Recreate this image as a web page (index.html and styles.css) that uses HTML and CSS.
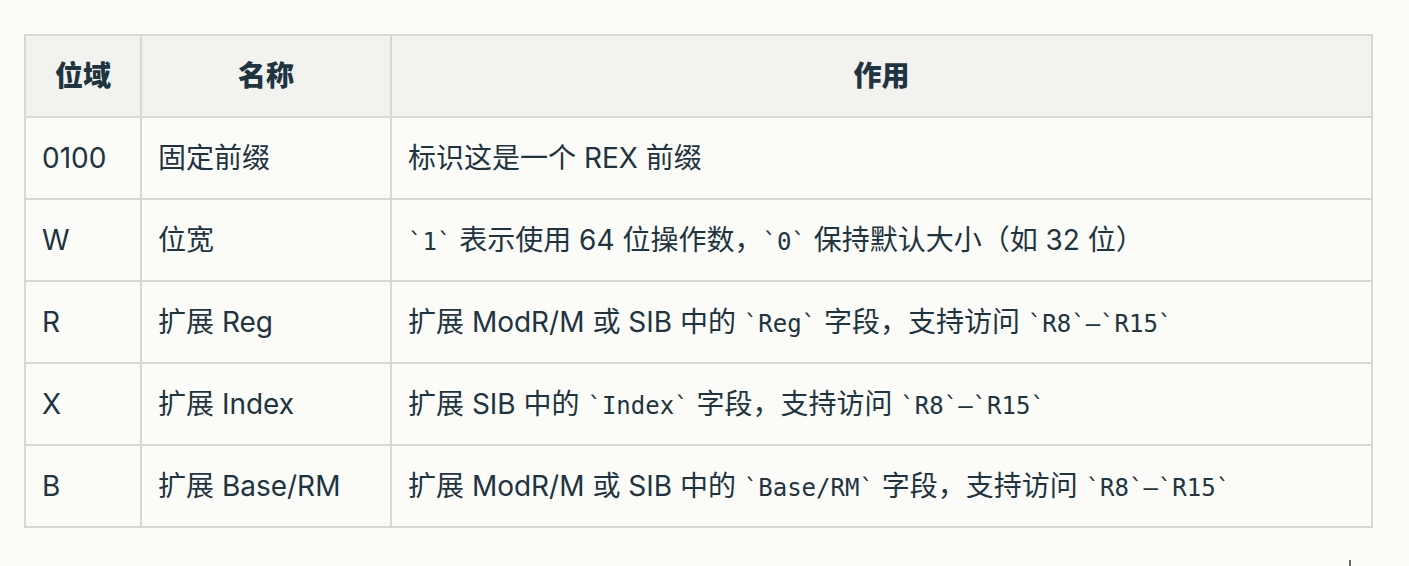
FILE: index.html
```html
<!DOCTYPE html>
<html lang="zh-CN">
<head>
<meta charset="utf-8">
<title>REX 前缀位域</title>
<link rel="stylesheet" href="styles.css">
</head>
<body>
<div class="page">
  <table class="rex">
    <colgroup>
      <col class="c1">
      <col class="c2">
      <col class="c3">
    </colgroup>
    <thead>
      <tr><th>位域</th><th>名称</th><th>作用</th></tr>
    </thead>
    <tbody>
      <tr><td>0100</td><td>固定前缀</td><td>标识这是一个 REX 前缀</td></tr>
      <tr><td>W</td><td>位宽</td><td><code>`1`</code> 表示使用 64 位操作数，<code>`0`</code> 保持默认大小（如 32 位）</td></tr>
      <tr><td>R</td><td>扩展 Reg</td><td>扩展 ModR/M 或 SIB 中的 <code>`Reg`</code> 字段，支持访问 <code>`R8`–`R15`</code></td></tr>
      <tr><td>X</td><td>扩展 Index</td><td>扩展 SIB 中的 <code>`Index`</code> 字段，支持访问 <code>`R8`–`R15`</code></td></tr>
      <tr><td>B</td><td>扩展 Base/RM</td><td>扩展 ModR/M 或 SIB 中的 <code>`Base/RM`</code> 字段，支持访问 <code>`R8`–`R15`</code></td></tr>
    </tbody>
  </table>
  <span class="caret"></span>
</div>
</body>
</html>
```
FILE: styles.css
```css
html, body {
  margin: 0;
  padding: 0;
  background: #fbfbf8;
}
body {
  font-family: Inter, "Noto Sans CJK SC", sans-serif;
  color: #1e3440;
  font-size: 28px;
}
.page {
  position: relative;
  height: 566px;
  padding: 34px 0 0 24px;
  box-sizing: border-box;
}
.rex {
  border-collapse: collapse;
  table-layout: fixed;
  width: 1347px;
}
.rex col.c1 { width: 116px; }
.rex col.c2 { width: 250px; }
.rex col.c3 { width: 981px; }
.rex th, .rex td {
  border: 2px solid #d8d8d2;
  padding: 0 16px;
  height: 80px;
  line-height: 44px;
  text-align: left;
  vertical-align: middle;
  white-space: nowrap;
}
.rex th {
  background: #f2f2ee;
  font-weight: 800;
  text-align: center;
}
.rex code {
  font-family: "DejaVu Sans Mono", monospace;
  font-size: 24px;
  line-height: 1;
  color: #22353f;
}
.caret {
  position: absolute;
  left: 1349px;
  top: 560px;
  width: 2px;
  height: 6px;
  background: #6a6a66;
}
```
